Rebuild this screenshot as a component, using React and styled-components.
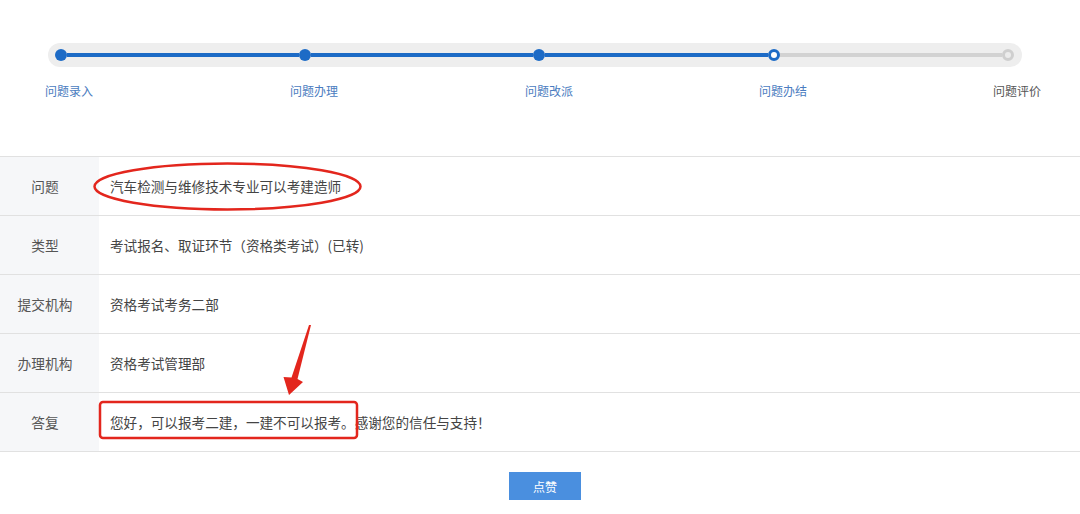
import React from 'react';
import styled, { createGlobalStyle } from 'styled-components';

const blue = '#1d6bc6';
const labelBlue = '#4a7cc0';
const lineGray = '#e1e1e1';
const red = '#e3261d';

const GlobalStyle = createGlobalStyle`
  html, body {
    margin: 0;
    padding: 0;
    background: #ffffff;
  }
  body {
    font-family: "Microsoft YaHei", "Noto Sans CJK SC", "Noto Sans", sans-serif;
    color: #333;
  }
`;

const Page = styled.div`
  position: relative;
  width: 1080px;
  height: 514px;
  overflow: hidden;
  background: #fff;
`;

const Progress = styled.section`
  padding-top: 43px;
  height: 156px;
  box-sizing: border-box;
`;

const Track = styled.div`
  display: flex;
  align-items: center;
  height: 24px;
  margin: 0 58px 0 48px;
  padding: 0 8px 0 7px;
  background: #eeeeee;
  border-radius: 12px;
`;

const Dot = styled.span`
  flex: none;
  box-sizing: border-box;
  width: 12px;
  height: 12px;
  border-radius: 50%;
  background: ${(p) => (p.$state === 'done' ? blue : p.$state === 'current' ? '#fff' : '#ececec')};
  border: ${(p) =>
    p.$state === 'done' ? 'none' : p.$state === 'current' ? `3px solid ${blue}` : '3px solid #cfcfcf'};
`;

const Segment = styled.span`
  flex: ${(p) => p.$grow} 1 0;
  height: 4px;
  background: ${(p) => (p.$done ? blue : '#d2d2d2')};
`;

const Labels = styled.div`
  display: flex;
  margin-top: 16px;
  padding-left: 45px;
`;

const StepLabel = styled.span`
  flex: none;
  width: 48px;
  margin-left: ${(p) => p.$gap}px;
  font-size: 12px;
  line-height: 16px;
  white-space: nowrap;
  color: ${(p) => (p.$muted ? '#555' : labelBlue)};
`;

const Table = styled.div`
  border-top: 1px solid ${lineGray};
`;

const Row = styled.div`
  display: flex;
  height: 58px;
  border-bottom: 1px solid ${lineGray};
`;

const Key = styled.div`
  flex: none;
  width: 99px;
  padding-right: 9px;
  box-sizing: border-box;
  display: flex;
  align-items: center;
  justify-content: center;
  background: #f6f7f9;
  font-size: 13.7px;
  color: #555;
`;

const Value = styled.div`
  display: flex;
  align-items: center;
  padding-left: 11px;
  font-size: 13.6px;
  color: #444;
  white-space: nowrap;
`;

const Actions = styled.div`
  display: flex;
  justify-content: center;
  padding: 20px 0 0 10px;
`;

const LikeButton = styled.button`
  width: 72px;
  height: 28px;
  border: none;
  border-radius: 0;
  background: #4a8fdf;
  color: #fff;
  font-family: inherit;
  font-size: 12px;
  cursor: pointer;
`;

const Marks = styled.svg`
  position: absolute;
  left: 0;
  top: 0;
  pointer-events: none;
`;

const steps = [
  { label: '问题录入', state: 'done', gap: 0 },
  { label: '问题办理', state: 'done', gap: 197, seg: 232 },
  { label: '问题改派', state: 'done', gap: 187, seg: 222 },
  { label: '问题办结', state: 'current', gap: 186, seg: 223 },
  { label: '问题评价', state: 'todo', gap: 186, seg: 222 },
];

const rows = [
  ['问题', '汽车检测与维修技术专业可以考建造师'],
  ['类型', '考试报名、取证环节（资格类考试）(已转)'],
  ['提交机构', '资格考试考务二部'],
  ['办理机构', '资格考试管理部'],
  ['答复', '您好，可以报考二建，一建不可以报考。感谢您的信任与支持！'],
];

const App = () => (
  <Page>
    <GlobalStyle />
    <Progress>
      <Track>
        {steps.map((s, i) => (
          <React.Fragment key={s.label}>
            {i > 0 && <Segment $grow={s.seg} $done={s.state !== 'todo'} />}
            <Dot $state={s.state} />
          </React.Fragment>
        ))}
      </Track>
      <Labels>
        {steps.map((s) => (
          <StepLabel key={s.label} $gap={s.gap} $muted={s.state === 'todo'}>
            {s.label}
          </StepLabel>
        ))}
      </Labels>
    </Progress>
    <Table>
      {rows.map(([k, v]) => (
        <Row key={k}>
          <Key>{k}</Key>
          <Value>{v}</Value>
        </Row>
      ))}
    </Table>
    <Actions>
      <LikeButton>点赞</LikeButton>
    </Actions>
    <Marks width="1080" height="514" viewBox="0 0 1080 514">
      <ellipse cx="227.5" cy="186.5" rx="133" ry="23" fill="none" stroke={red} strokeWidth="2.5" />
      <rect x="100" y="402" width="257" height="36" rx="3" fill="none" stroke={red} strokeWidth="2.5" />
      <polygon
        points="311,325 297.5,379 303,382 289,395 283.5,377 291.5,377.5 309,325"
        fill={red}
      />
    </Marks>
  </Page>
);

export default App;
